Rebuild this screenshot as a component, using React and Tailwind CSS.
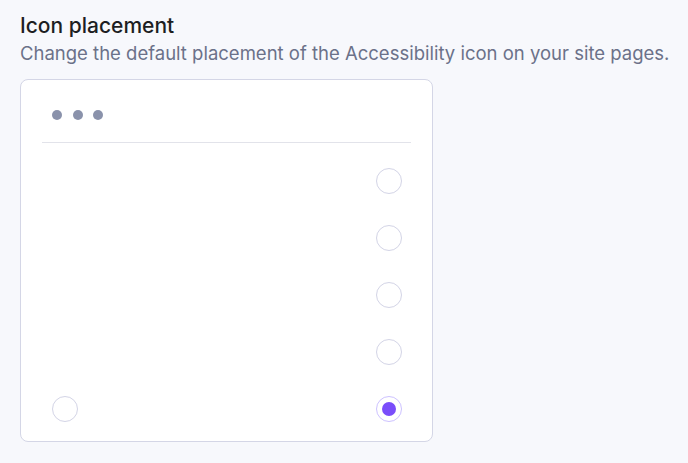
import { useState } from "react";

function Radio({ checked, onClick }) {
  return (
    <button
      type="button"
      onClick={onClick}
      className={`w-[26px] h-[26px] rounded-full border-[1.5px] flex items-center justify-center bg-white ${
        checked ? "border-[#cdc2ff]" : "border-[#d3d4e6]"
      }`}
    >
      {checked && <span className="w-[14px] h-[14px] rounded-full bg-[#7a4dfa]" />}
    </button>
  );
}

export default function App() {
  const [pos, setPos] = useState("bottom-right");
  const rows = ["r1", "r2", "r3", "r4"];

  return (
    <div className="min-h-[463px] bg-[#f7f8fc] px-5 pt-[13px] font-['Inter',sans-serif]">
      <h2 className="text-[21px] leading-[26px] font-medium text-[#1d1e22] whitespace-nowrap">Icon placement</h2>
      <p className="mt-[2px] text-[18.5px] leading-[24px] text-[#6b7189] whitespace-nowrap">
        Change the default placement of the Accessibility icon on your site pages.
      </p>
      <div className="mt-[14px] w-[413px] rounded-lg border border-[#d4d6e6] bg-white px-[21px]">
        <div className="pt-[30px] pb-[22px] px-[10px] border-b border-[#e2e3ea] flex gap-[10.5px]">
          <span className="w-[10px] h-[10px] rounded-full bg-[#8a92ab]" />
          <span className="w-[10px] h-[10px] rounded-full bg-[#8a92ab]" />
          <span className="w-[10px] h-[10px] rounded-full bg-[#8a92ab]" />
        </div>
        <div className="pt-[25px] pb-[19px] pl-[10px] pr-[9px] flex flex-col gap-[31px]">
          {rows.map((r) => (
            <div key={r} className="flex justify-end">
              <Radio checked={pos === r} onClick={() => setPos(r)} />
            </div>
          ))}
          <div className="flex justify-between">
            <Radio checked={pos === "bottom-left"} onClick={() => setPos("bottom-left")} />
            <Radio checked={pos === "bottom-right"} onClick={() => setPos("bottom-right")} />
          </div>
        </div>
      </div>
    </div>
  );
}
